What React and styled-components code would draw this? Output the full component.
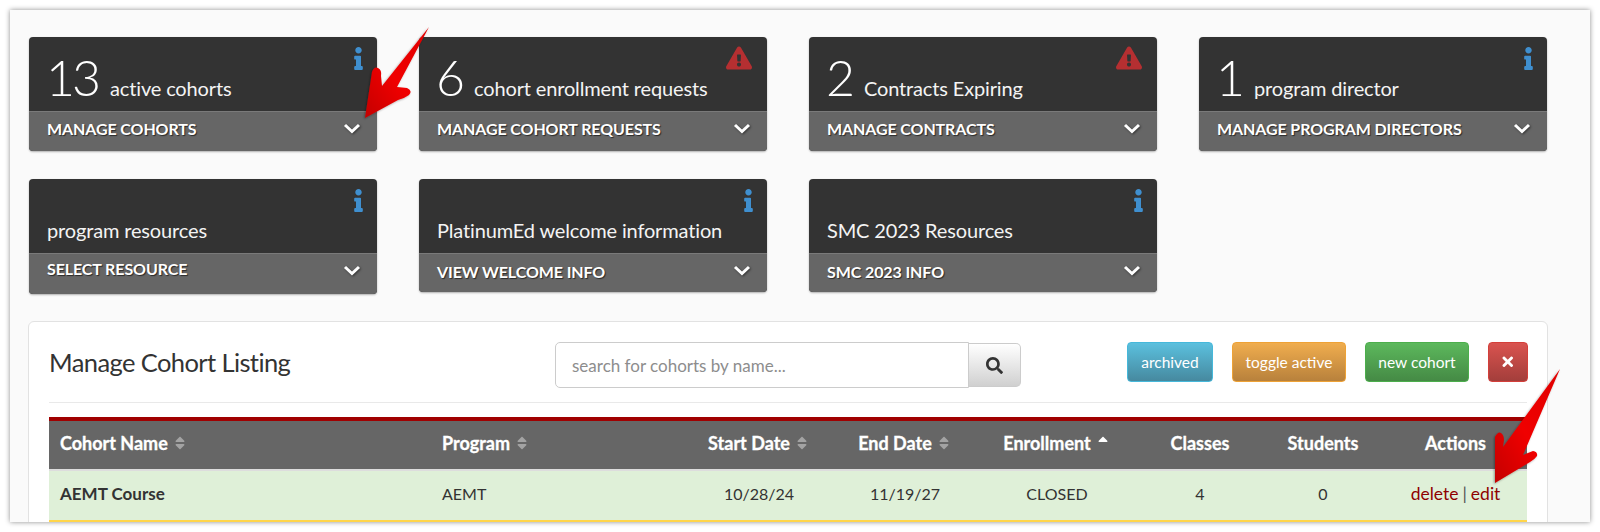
import React from "react";
import styled, { createGlobalStyle } from "styled-components";
import { FaInfo, FaExclamationTriangle, FaSearch, FaTimes, FaSort, FaSortUp } from "react-icons/fa";

const Global = createGlobalStyle`
  html, body { margin: 0; padding: 0; background: #fff; height: 532px; overflow: hidden; }
  * { box-sizing: border-box; }
  body { font-family: "Lato", "Open Sans", sans-serif; color: #333; }
`;

const Frame = styled.div`
  position: relative;
  width: 1600px;
  height: 532px;
  padding: 10px;
  overflow: hidden;
`;
const Window = styled.div`
  width: 1580px;
  height: 512px;
  padding: 27px 42px 0 18px;
  background: #fafafa;
  box-shadow: 0 0 5px rgba(0, 0, 0, 0.45);
  overflow: hidden;
`;
const CardGrid = styled.div`
  display: grid;
  grid-template-columns: repeat(4, 348px);
  column-gap: 42px;
  row-gap: 28px;
  align-items: start;
  margin-left: 1px;
  margin-bottom: 27px;
`;
const Card = styled.div`
  height: ${(p) => p.$h}px;
  border-radius: 4px;
  overflow: hidden;
  background: #333;
  box-shadow: 0 1px 2px rgba(0, 0, 0, 0.3);
  display: flex;
  flex-direction: column;
`;
const CardTop = styled.div`
  position: relative;
  height: 75px;
  flex: none;
  padding: 0 18px;
  display: flex;
  align-items: flex-end;
  color: #fff;
  border-bottom: 1px solid #7a7a7a;
`;
const Count = styled.span`
  font-size: 50px;
  font-weight: 300;
  line-height: 64px;
  margin: 0 12px 2px -1px;
  letter-spacing: -3px;
`;
const Label = styled.span`
  font-size: 20px;
  font-weight: 400;
  line-height: 30px;
  padding-bottom: 8px;
  color: #f4f4f4;
  letter-spacing: -0.15px;
`;
const Badge = styled.span`
  position: absolute;
  top: ${(p) => (p.$warn ? "8px" : "10px")};
  right: ${(p) => (p.$warn ? "15px" : "7.5px")};
  color: ${(p) => (p.$warn ? "#b52f31" : "#3f8fcf")};
  font-size: ${(p) => (p.$warn ? "26px" : "23px")};
  line-height: 0;
`;
const CardFoot = styled.div`
  flex: 1;
  background: #666;
  padding: 0 16px 0 18px;
  display: flex;
  align-items: flex-start;
  justify-content: space-between;
  color: #fff;
`;
const FootText = styled.span`
  padding-top: ${(p) => p.$top}px;
  font-size: 16px;
  line-height: 20px;
  font-weight: 700;
  letter-spacing: -0.1px;
  text-shadow: 1px 1px 1px rgba(0, 0, 0, 0.6);
`;
const Chevron = styled.svg`
  width: 18px;
  height: 12px;
  margin-top: 10px;
  filter: drop-shadow(1px 1px 1px rgba(0, 0, 0, 0.5));
`;
const Panel = styled.section`
  width: 1520px;
  height: 260px;
  background: #fff;
  border: 1px solid #e2e2e2;
  border-radius: 6px;
  padding: 0 20px;
`;
const HeadRow = styled.div`
  height: 81px;
  border-bottom: 1px solid #e9e9e9;
  display: flex;
  align-items: center;
`;
const Title = styled.h2`
  margin: 0;
  width: 506px;
  font-size: 25.5px;
  font-weight: 400;
  color: #333;
  letter-spacing: -0.6px;
`;
const Search = styled.div`
  display: flex;
  align-items: center;
  width: 466px;
  margin-top: 6px;
`;
const SearchInput = styled.div`
  width: 414px;
  height: 46px;
  border: 1px solid #ccc;
  border-radius: 5px 0 0 5px;
  padding-left: 16px;
  display: flex;
  align-items: center;
  font-size: 17px;
  color: #8d8d8d;
  background: #fff;
`;
const SearchButton = styled.div`
  width: 52px;
  height: 44px;
  border: 1px solid #ccc;
  border-left: 0;
  border-radius: 0 5px 5px 0;
  background: linear-gradient(#fff, #d0d0d0);
  display: flex;
  align-items: center;
  justify-content: center;
  font-size: 17px;
  color: #333;
`;
const Actions = styled.div`
  margin-left: auto;
  margin-right: -1px;
  display: flex;
  gap: 19px;
  margin-top: -1px;
`;
const Btn = styled.div`
  height: 40px;
  width: ${(p) => p.$w}px;
  border-radius: 4px;
  border: 1px solid ${(p) => p.$edge};
  background: linear-gradient(${(p) => p.$from}, ${(p) => p.$to});
  color: #fff;
  font-size: 15.5px;
  display: flex;
  align-items: center;
  justify-content: center;
`;
const Table = styled.div`
  margin-top: 14px;
  border-top: 4px solid #a00000;
`;
const Row = styled.div`
  display: grid;
  grid-template-columns: 381px 254px 150px 142px 162px 124px 122px 143px;
  align-items: center;
`;
const HeaderRow = styled(Row)`
  height: 48px;
  background: #666;
  color: #fff;
  font-weight: 700;
  font-size: 18px;
  padding-bottom: 5px;
  -webkit-text-stroke: 0.3px #fff;
`;
const BodyRow = styled(Row)`
  height: 53px;
  background: #dff0d8;
  border-top: 2px solid #ddd;
  border-bottom: 2px solid #ffd54a;
  font-size: 16px;
  color: #333;
  padding-bottom: 5px;
`;
const Cell = styled.div`
  display: flex;
  align-items: center;
  gap: 4px;
  justify-content: ${(p) => (p.$left ? "flex-start" : "center")};
  padding-left: ${(p) => p.$pad || 0}px;
  font-weight: ${(p) => (p.$bold ? 700 : "inherit")};
  font-size: ${(p) => (p.$bold ? "17px" : "inherit")};
`;
const SortIcon = styled.span`
  display: inline-flex;
  font-size: 16px;
  -webkit-text-stroke: 0;
  color: ${(p) => (p.$on ? "#fff" : "#a3a3a3")};
`;
const Link = styled.span`
  color: #8f0000;
  font-size: 17.5px;
`;
const Sep = styled.span`
  color: #555;
  margin: 0 4px;
  font-size: 17.5px;
`;
const ArrowLayer = styled.svg`
  position: absolute;
  left: 0;
  top: 0;
  width: 1600px;
  height: 532px;
  pointer-events: none;
`;

const cards = [
  { n: "13", label: "active cohorts", foot: "MANAGE COHORTS", h: 114, top: 7 },
  { n: "6", label: "cohort enrollment requests", foot: "MANAGE COHORT REQUESTS", warn: true, h: 114, top: 7 },
  { n: "2", label: "Contracts Expiring", foot: "MANAGE CONTRACTS", warn: true, h: 114, top: 7 },
  { n: "1", label: "program director", foot: "MANAGE PROGRAM DIRECTORS", h: 114, top: 7 },
  { label: "program resources", foot: "SELECT RESOURCE", h: 115, top: 5 },
  { label: "PlatinumEd welcome information", foot: "VIEW WELCOME INFO", h: 113, top: 8 },
  { label: "SMC 2023 Resources", foot: "SMC 2023 INFO", h: 113, top: 8 },
];

const heads = [
  ["Cohort Name", true],
  ["Program", true],
  ["Start Date", true],
  ["End Date", true],
  ["Enrollment", "up"],
  ["Classes"],
  ["Students"],
  ["Actions"],
];

export default function App() {
  return (
    <Frame>
      <Global />
      <Window>
        <CardGrid>
          {cards.map((c) => (
            <Card key={c.foot} $h={c.h}>
              <CardTop>
                {c.n && <Count>{c.n}</Count>}
                <Label>{c.label}</Label>
                <Badge $warn={c.warn}>{c.warn ? <FaExclamationTriangle /> : <FaInfo />}</Badge>
              </CardTop>
              <CardFoot>
                <FootText $top={c.top}>{c.foot}</FootText>
                <Chevron viewBox="0 0 18 12">
                  <path d="M2 3l7 6.5L16 3" fill="none" stroke="#fff" strokeWidth="3" />
                </Chevron>
              </CardFoot>
            </Card>
          ))}
        </CardGrid>
        <Panel>
          <HeadRow>
            <Title>Manage Cohort Listing</Title>
            <Search>
              <SearchInput>search for cohorts by name...</SearchInput>
              <SearchButton><FaSearch /></SearchButton>
            </Search>
            <Actions>
              <Btn $w={86} $edge="#46b8da" $from="#5bc0de" $to="#46899f">archived</Btn>
              <Btn $w={114} $edge="#eea236" $from="#f0ad4e" $to="#b8813c">toggle active</Btn>
              <Btn $w={104} $edge="#4cae4c" $from="#5cb85c" $to="#458a45">new cohort</Btn>
              <Btn $w={40} $edge="#d43f3a" $from="#d9534f" $to="#a33e3b"><FaTimes /></Btn>
            </Actions>
          </HeadRow>
          <Table>
            <HeaderRow>
              {heads.map(([h, s], i) => (
                <Cell key={h} $left={i < 2} $pad={i === 0 ? 11 : i === 1 ? 12 : 0}>
                  {h}
                  {s && <SortIcon $on={s === "up"}>{s === "up" ? <FaSortUp /> : <FaSort />}</SortIcon>}
                </Cell>
              ))}
            </HeaderRow>
            <BodyRow>
              <Cell $left $pad={11} $bold>AEMT Course</Cell>
              <Cell $left $pad={12}>AEMT</Cell>
              <Cell>10/28/24</Cell>
              <Cell>11/19/27</Cell>
              <Cell>CLOSED</Cell>
              <Cell>4</Cell>
              <Cell>0</Cell>
              <Cell><span><Link>delete</Link><Sep>|</Sep><Link>edit</Link></span></Cell>
            </BodyRow>
          </Table>
        </Panel>
      </Window>
      <ArrowLayer viewBox="0 0 1600 532">
        <defs>
          <linearGradient id="redGrad" x1="0" y1="1" x2="1" y2="0">
            <stop offset="0" stopColor="#c40000" />
            <stop offset="0.45" stopColor="#f00000" />
            <stop offset="1" stopColor="#e00000" />
          </linearGradient>
          <filter id="arrowShadow" x="-20%" y="-20%" width="140%" height="140%">
            <feDropShadow dx="-1" dy="1" stdDeviation="1.2" floodOpacity="0.35" />
          </filter>
        </defs>
        <path
          d="M365 118 L372 72 Q374 66 378 68 Q382 70 381 76 L382 86 L429 27 L397 87 L407 88 Q413 91 409 95 Q405 98 398 100 Z"
          fill="url(#redGrad)"
          filter="url(#arrowShadow)"
        />
        <path
          d="M1495 483 L1495 437 Q1498 431 1501 433 Q1504 435 1504 440 L1503 447 L1560 369 L1523 455 L1533 451 Q1538 452 1537 456 Q1535 459 1530 462 Z"
          fill="url(#redGrad)"
          filter="url(#arrowShadow)"
        />
      </ArrowLayer>
    </Frame>
  );
}
